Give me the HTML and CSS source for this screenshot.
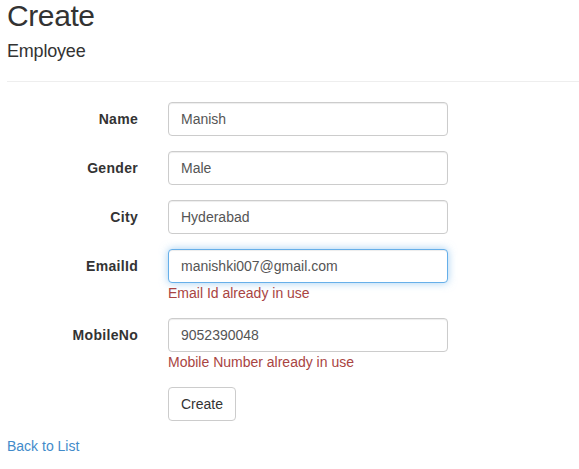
FILE: index.html
```html
<!DOCTYPE html>
<html>
<head>
<meta charset="utf-8">
<title>Create</title>
<link rel="stylesheet" href="styles.css">
</head>
<body>
<div class="page">
  <h2 class="title">Create</h2>
  <form class="form-horizontal">
    <h4 class="subtitle">Employee</h4>
    <hr class="rule">
    <div class="form-group">
      <label class="control-label">Name</label>
      <div class="field"><input class="form-control" type="text" value="Manish"></div>
    </div>
    <div class="form-group">
      <label class="control-label">Gender</label>
      <div class="field"><input class="form-control" type="text" value="Male"></div>
    </div>
    <div class="form-group">
      <label class="control-label">City</label>
      <div class="field"><input class="form-control" type="text" value="Hyderabad"></div>
    </div>
    <div class="form-group">
      <label class="control-label">EmailId</label>
      <div class="field">
        <input class="form-control focused" type="text" value="manishki007@gmail.com">
        <span class="text-danger">Email Id already in use</span>
      </div>
    </div>
    <div class="form-group">
      <label class="control-label">MobileNo</label>
      <div class="field">
        <input class="form-control" type="text" value="9052390048">
        <span class="text-danger">Mobile Number already in use</span>
      </div>
    </div>
    <div class="form-group">
      <div class="spacer"></div>
      <div class="field"><button type="button" class="btn">Create</button></div>
    </div>
  </form>
  <div class="back"><a href="#">Back to List</a></div>
</div>
</body>
</html>
```
FILE: styles.css
```css
* { box-sizing: border-box; }
html, body {
  margin: 0;
  padding: 0;
  background: #fff;
}
body {
  font-family: "Liberation Sans", Arial, Helvetica, sans-serif;
  font-size: 14px;
  line-height: 20px;
  color: #333;
}
.page {
  padding: 0 0 0 7px;
}
.title {
  font-size: 30px;
  font-weight: 500;
  line-height: 33px;
  margin: -1px 0 0 0;
  letter-spacing: -0.4px;
}
.form-horizontal {
  margin: 0;
}
.subtitle {
  font-size: 18px;
  font-weight: 500;
  line-height: 19.8px;
  margin: 9.5px 0 0 0;
  letter-spacing: -0.2px;
}
.rule {
  margin: 20px 0 20px 0;
  border: 0;
  border-top: 1px solid #eee;
  height: 0;
}
.form-group {
  display: flex;
  margin-bottom: 15px;
}
.control-label,
.spacer {
  width: 146px;
  flex: none;
  text-align: right;
  font-weight: bold;
  padding: 7px 15px 0 0;
  letter-spacing: 0.3px;
}
.field {
  padding-left: 15px;
  display: flex;
  flex-direction: column;
  align-items: flex-start;
}
.form-control {
  display: block;
  width: 280px;
  height: 34px;
  padding: 6px 12px;
  font-family: inherit;
  font-size: 14px;
  line-height: 20px;
  color: #555;
  background: #fff;
  border: 1px solid #ccc;
  border-radius: 4px;
  box-shadow: inset 0 1px 1px rgba(0,0,0,.075);
  margin: 0;
}
.form-control.focused {
  border-color: #66afe9;
  outline: 0;
  box-shadow: inset 0 1px 1px rgba(0,0,0,.075), 0 0 8px rgba(102,175,233,.6);
}
.text-danger {
  color: #a94442;
  line-height: 20px;
}
.btn {
  display: inline-block;
  height: 34px;
  padding: 6px 12px;
  font-family: inherit;
  font-size: 14px;
  line-height: 20px;
  color: #333;
  background: #fff;
  border: 1px solid #ccc;
  border-radius: 4px;
  margin: 0;
}
.back {
  margin-top: 0;
}
.back a {
  color: #428bca;
  text-decoration: none;
}
```
